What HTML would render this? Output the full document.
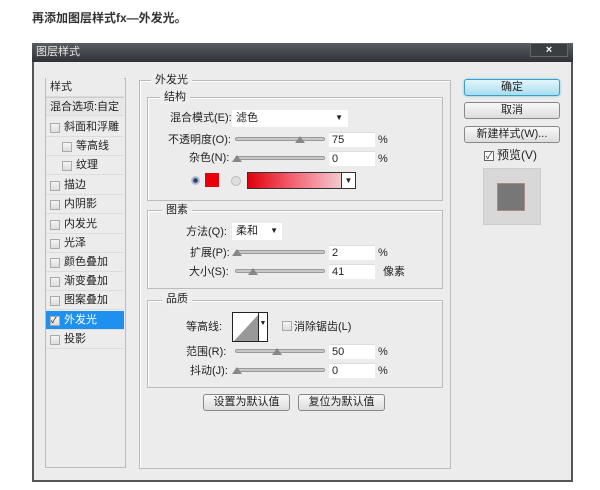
<!DOCTYPE html>
<html><head><meta charset="utf-8"><style>
*{margin:0;padding:0;box-sizing:border-box}
body{width:600px;height:490px;background:#fff;position:relative;overflow:hidden;font-family:"Liberation Sans","Noto Sans CJK SC",sans-serif;font-size:11px;color:#222}
.a{position:absolute}
.t{position:absolute;white-space:nowrap;line-height:14px}
.cb{position:absolute;width:10px;height:10px;border:1px solid #aaa;background:linear-gradient(#f4f4f4,#ddd)}
.grp{position:absolute;border:1px solid #bbb;box-shadow:1px 1px 0 #fff inset}
.lg{position:absolute;background:#eee;padding:0 4px;line-height:14px;font-size:11px}
.trk{position:absolute;height:4px;border:1px solid #999;background:#c8c8c8;border-radius:2px;width:90px}
.th{position:absolute;width:0;height:0;border-left:5px solid transparent;border-right:5px solid transparent;border-bottom:7px solid #888}
.in{position:absolute;background:#fff;border-top:1px solid #ddd;width:46px;height:15px;padding-left:3px;line-height:14px}
.btn{position:absolute;border:1px solid #888;border-radius:3px;background:linear-gradient(#f8f8f8,#ddd);text-align:center;line-height:15px}
.li{position:absolute;left:46px;width:78px;height:19px;border-bottom:1px solid #ddd;line-height:18px}
</style></head><body>
<div class="t" style="left:32px;top:11px;font-size:12px;font-weight:bold;color:#333">再添加图层样式fx—外发光。</div>
<div class="a" style="left:32px;top:43px;width:541px;height:439px;background:#ececec;border:2px solid #555;border-top:none"></div>
<div class="a" style="left:32px;top:43px;width:541px;height:19px;background:linear-gradient(#5a5e63,#2e3135)"></div>
<div class="t" style="left:36px;top:45px;color:#e8e8e8">图层样式</div>
<div class="a" style="left:530px;top:43px;width:38px;height:14px;background:#3a3d41;border:1px solid #666;color:#fff;text-align:center;font-weight:bold;line-height:12px">×</div>
<!-- left list -->
<div class="a" style="left:45px;top:78px;width:81px;height:390px;border:1px solid #bbb;background:#ececec"></div>
<div class="li" style="top:78px;padding-left:4px;background:#ececec">样式</div>
<div class="li" style="top:97px;padding-left:4px;background:#e6e6e6;border-top:1px solid #ccc">混合选项:自定</div>
<div class="li" style="top:118px;padding-left:18px">斜面和浮雕</div><div class="cb" style="left:50px;top:123px"></div>
<div class="li" style="top:137px;padding-left:30px">等高线</div><div class="cb" style="left:62px;top:142px"></div>
<div class="li" style="top:156px;padding-left:30px">纹理</div><div class="cb" style="left:62px;top:161px"></div>
<div class="li" style="top:176px;padding-left:18px">描边</div><div class="cb" style="left:50px;top:181px"></div>
<div class="li" style="top:195px;padding-left:18px">内阴影</div><div class="cb" style="left:50px;top:200px"></div>
<div class="li" style="top:215px;padding-left:18px">内发光</div><div class="cb" style="left:50px;top:220px"></div>
<div class="li" style="top:234px;padding-left:18px">光泽</div><div class="cb" style="left:50px;top:239px"></div>
<div class="li" style="top:253px;padding-left:18px">颜色叠加</div><div class="cb" style="left:50px;top:258px"></div>
<div class="li" style="top:272px;padding-left:18px">渐变叠加</div><div class="cb" style="left:50px;top:277px"></div>
<div class="li" style="top:291px;padding-left:18px">图案叠加</div><div class="cb" style="left:50px;top:296px"></div>
<div class="li" style="top:311px;padding-left:18px;background:#1e90f0;color:#fff">外发光</div><div class="cb" style="left:50px;top:316px;font-size:8px;line-height:8px;color:#000">✓</div>
<div class="li" style="top:330px;padding-left:18px">投影</div><div class="cb" style="left:50px;top:335px"></div>
<!-- main group -->
<div class="grp" style="left:139px;top:80px;width:312px;height:389px"></div>
<div class="lg" style="left:151px;top:73px">外发光</div>
<div class="grp" style="left:147px;top:97px;width:296px;height:104px"></div>
<div class="lg" style="left:160px;top:90px">结构</div>
<div class="t" style="left:170px;top:111px">混合模式(E):</div>
<div class="a" style="left:232px;top:110px;width:116px;height:17px;background:#fff;padding-left:4px;line-height:16px">滤色<span style="position:absolute;right:5px;font-size:8px">▼</span></div>
<div class="t" style="left:168px;top:133px">不透明度(O):</div>
<div class="trk" style="left:235px;top:137px"></div><div class="th" style="left:295px;top:136px"></div>
<div class="in" style="left:329px;top:132px">75</div><div class="t" style="left:378px;top:133px">%</div>
<div class="t" style="left:189px;top:151px">杂色(N):</div>
<div class="trk" style="left:235px;top:156px"></div><div class="th" style="left:232px;top:155px"></div>
<div class="in" style="left:329px;top:151px">0</div><div class="t" style="left:378px;top:152px">%</div>
<div class="a" style="left:191px;top:176px;width:9px;height:9px;border-radius:50%;background:radial-gradient(#246 30%,#aac 40%,#ddd)"></div>
<div class="a" style="left:205px;top:173px;width:14px;height:14px;background:#e8000a"></div>
<div class="a" style="left:231px;top:176px;width:10px;height:10px;border-radius:50%;background:#ddd;border:1px solid #bbb"></div>
<div class="a" style="left:247px;top:172px;width:109px;height:17px;border:1px solid #333;background:linear-gradient(90deg,#e0000c,#f56a7a 45%,#f0e8ea)"></div>
<div class="a" style="left:341px;top:172px;width:15px;height:17px;border:1px solid #333;background:#fff;font-size:8px;text-align:center;line-height:15px">▼</div>
<div class="grp" style="left:147px;top:210px;width:296px;height:79px"></div>
<div class="lg" style="left:162px;top:203px">图素</div>
<div class="t" style="left:186px;top:225px">方法(Q):</div>
<div class="a" style="left:232px;top:223px;width:50px;height:17px;background:#fff;padding-left:4px;line-height:16px">柔和<span style="position:absolute;right:4px;font-size:8px">▼</span></div>
<div class="t" style="left:190px;top:246px">扩展(P):</div>
<div class="trk" style="left:235px;top:250px"></div><div class="th" style="left:232px;top:249px"></div>
<div class="in" style="left:329px;top:245px">2</div><div class="t" style="left:378px;top:246px">%</div>
<div class="t" style="left:189px;top:265px">大小(S):</div>
<div class="trk" style="left:235px;top:269px"></div><div class="th" style="left:248px;top:268px"></div>
<div class="in" style="left:329px;top:264px">41</div><div class="t" style="left:383px;top:265px">像素</div>
<div class="grp" style="left:147px;top:300px;width:296px;height:88px"></div>
<div class="lg" style="left:162px;top:292px">品质</div>
<div class="t" style="left:186px;top:320px">等高线:</div>
<div class="a" style="left:232px;top:312px;width:36px;height:30px;border:1px solid #222;background:#fff;overflow:hidden">
<svg width="26" height="28" style="position:absolute;left:0;top:0"><polygon points="1,28 25,2 25,28" fill="#999"/></svg>
<div style="position:absolute;right:0;top:0;width:9px;height:28px;border-left:1px solid #222;font-size:7px;text-align:center;line-height:22px">▼</div></div>
<div class="cb" style="left:282px;top:321px"></div>
<div class="t" style="left:294px;top:320px">消除锯齿(L)</div>
<div class="t" style="left:186px;top:345px">范围(R):</div>
<div class="trk" style="left:235px;top:349px"></div><div class="th" style="left:272px;top:348px"></div>
<div class="in" style="left:329px;top:344px">50</div><div class="t" style="left:378px;top:345px">%</div>
<div class="t" style="left:190px;top:364px">抖动(J):</div>
<div class="trk" style="left:235px;top:368px"></div><div class="th" style="left:232px;top:367px"></div>
<div class="in" style="left:329px;top:363px">0</div><div class="t" style="left:378px;top:364px">%</div>
<div class="btn" style="left:203px;top:394px;width:87px;height:17px">设置为默认值</div>
<div class="btn" style="left:298px;top:394px;width:87px;height:17px">复位为默认值</div>
<!-- right -->
<div class="btn" style="left:464px;top:79px;width:96px;height:17px;border-color:#3aa0c8;background:linear-gradient(#e4f6fc,#a8dcef);box-shadow:0 0 2px #5bc0e0">确定</div>
<div class="btn" style="left:464px;top:102px;width:96px;height:17px">取消</div>
<div class="btn" style="left:464px;top:126px;width:96px;height:17px">新建样式(W)...</div>
<div class="cb" style="left:484px;top:151px;background:#fff;border-color:#666;font-size:9px;line-height:8px;text-align:center">✓</div>
<div class="t" style="left:497px;top:148px;font-size:12px">预览(V)</div>
<div class="a" style="left:483px;top:168px;width:58px;height:57px;background:#d8d8d8;border:1px solid #ccc"></div>
<div class="a" style="left:497px;top:183px;width:28px;height:28px;background:#777;border:1px solid #a88"></div>
</body></html>
